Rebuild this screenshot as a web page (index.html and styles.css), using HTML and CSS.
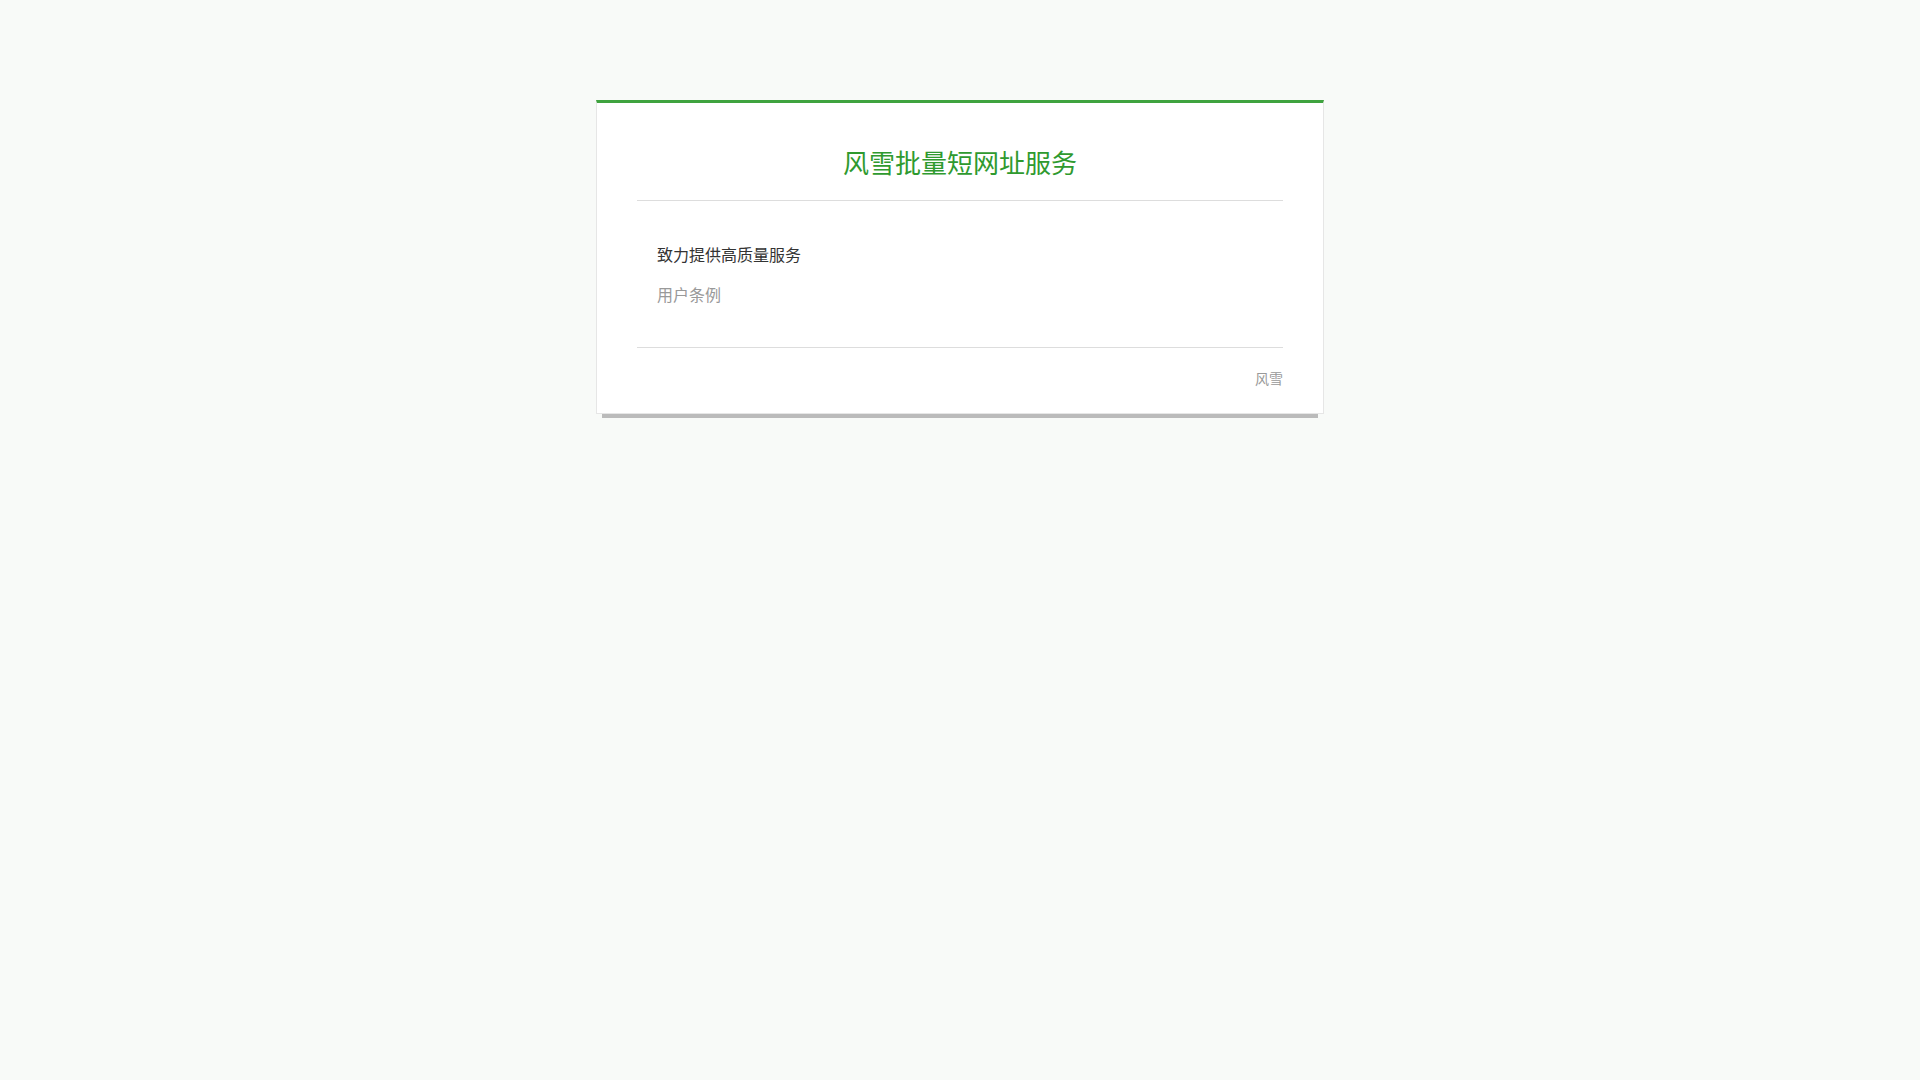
FILE: index.html
```html
<!DOCTYPE html>
<html lang="zh-CN">
<head>
    <meta charset="UTF-8">
    <meta name="viewport" content="width=device-width, initial-scale=1.0">
    <title>风雪批量短网址服务</title>
    <link rel="stylesheet" href="styles.css">
</head>
<body>

<div class="wrap">
    <div class="card">
        <div class="card-head">
            <h1>风雪批量短网址服务</h1>
        </div>
        <div class="card-body">
            <p class="slogan">致力提供高质量服务</p>
            <p class="link">用户条例</p>
        </div>
        <div class="card-foot">风雪</div>
    </div>
    <div class="card-shadow"></div>
</div>

</body>
</html>
```

FILE: styles.css
```css
/* 页面 */
body {
    margin: 0;
    background: #f8faf8;
    font-family: "Noto Sans CJK SC", "Noto Sans", sans-serif;
}
.wrap {
    width: 728px;
    margin: 100px auto 0;
}

/* 卡片 */
.card {
    background: #fff;
    border: 1px solid #e6e6e6;
    border-top: 3px solid #3fa33f;
    padding: 0 40px;
}
.card-head {
    padding: 41px 0 20px;
    border-bottom: 1px solid #dddddd;
    text-align: center;
}
.card-head h1 {
    margin: 0;
    font-size: 26px;
    line-height: 36px;
    font-weight: normal;
    color: #2f9a2f;
}
.card-body {
    padding: 41px 20px 41px;
    border-bottom: 1px solid #dddddd;
}
.card-body p {
    margin: 0;
    font-size: 16px;
    line-height: 24px;
}
.card-body .slogan {
    color: #333;
    margin-bottom: 16px;
}
.card-body .link {
    color: #999;
}
.card-foot {
    padding: 20px 0 25px;
    text-align: right;
    font-size: 14px;
    line-height: 20px;
    color: #999;
}
.card-shadow {
    height: 4px;
    margin: 0 6px;
    background: #bbbbbb;
}
```
